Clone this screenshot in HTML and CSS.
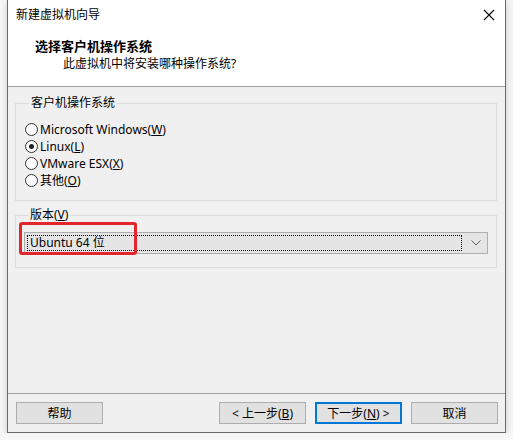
FILE: index.html
```html
<!DOCTYPE html>
<html lang="zh-CN">
<head>
    <meta charset="UTF-8">
    <title>新建虚拟机向导</title>
    <link rel="stylesheet" href="styles.css">
</head>
<body>

<div class="window">
    <div class="header">
        <div class="titlebar">
            <span class="title">新建虚拟机向导</span>
            <svg class="close" width="12" height="12" viewBox="0 0 12 12">
                <path d="M1 1 L11 11 M11 1 L1 11" stroke="#000" stroke-width="1.1" fill="none"/>
            </svg>
        </div>
        <h1>选择客户机操作系统</h1>
        <p class="subtitle">此虚拟机中将安装哪种操作系统?</p>
    </div>

    <div class="content">
        <fieldset class="group">
            <legend>客户机操作系统</legend>
            <div class="radio-list">
                <label class="radio"><span class="dot"></span><span>Microsoft Windows(<u>W</u>)</span></label>
                <label class="radio checked"><span class="dot"></span><span>Linux(<u>L</u>)</span></label>
                <label class="radio"><span class="dot"></span><span>VMware ESX(<u>X</u>)</span></label>
                <label class="radio"><span class="dot"></span><span>其他(<u>O</u>)</span></label>
            </div>
        </fieldset>

        <fieldset class="group version">
            <legend>版本(<u>V</u>)</legend>
            <div class="combo">
                <div class="combo-value">Ubuntu 64 位</div>
                <svg class="chevron" width="10" height="6" viewBox="0 0 10 6">
                    <path d="M0.5 0.5 L5 5 L9.5 0.5" stroke="#606060" stroke-width="1" fill="none"/>
                </svg>
            </div>
            <div class="highlight"></div>
        </fieldset>
    </div>

    <div class="footer">
        <button class="btn">帮助</button>
        <div class="nav">
            <button class="btn">&lt; 上一步(<u>B</u>)</button>
            <button class="btn primary">下一步(<u>N</u>) &gt;</button>
            <button class="btn">取消</button>
        </div>
    </div>
</div>

</body>
</html>
```

FILE: styles.css
```css
body {
    margin: 0;
    background-color: #f7f7f7;
    font-family: "Noto Sans", "Noto Sans CJK SC", sans-serif;
    font-size: 12px;
    color: #000;
}

.window {
    margin-left: 7px;
    width: 497px;
    height: 432px;
    border: 1px solid #6a6a6a;
    border-top: none;
    background-color: #f0f0f0;
    display: flex;
    flex-direction: column;
    box-shadow: 0 2px 8px rgba(0, 0, 0, 0.18);
}

.header {
    background-color: #ffffff;
    height: 86px;
    border-bottom: 1px solid #a0a0a0;
}

.titlebar {
    height: 30px;
    display: flex;
    align-items: center;
    justify-content: space-between;
    padding: 0 10px 0 8px;
}

.title {
    line-height: 14px;
}

h1 {
    margin: 0;
    padding-left: 27px;
    font-size: 13px;
    font-weight: bold;
    line-height: 16px;
    margin-top: 8px;
}

.subtitle {
    margin: 2px 0 0;
    padding-left: 55px;
    line-height: 16px;
}

.content {
    flex: 1;
    padding: 0 8px 0 7px;
}

.group {
    margin: 9px 0 0;
    padding: 11px 8px 11px 9px;
    border: 1px solid #dcdcdc;
    min-width: 0;
}

.group legend {
    padding: 0 2px;
    margin-left: 4px;
    line-height: 14px;
}

.radio-list {
    display: flex;
    flex-direction: column;
}

.radio {
    height: 17px;
    display: flex;
    align-items: center;
    gap: 2px;
    line-height: 17px;
}

.dot {
    width: 11px;
    height: 11px;
    border: 1px solid #333;
    border-radius: 50%;
    background: #fff;
    display: flex;
    align-items: center;
    justify-content: center;
}

.radio.checked .dot::after {
    content: "";
    width: 5px;
    height: 5px;
    border-radius: 50%;
    background: #222;
}

.version {
    position: relative;
    margin-top: 7px;
    padding: 10px 8px 13px 8px;
}

.combo {
    height: 20px;
    border: 1px solid #adadad;
    background-color: #e5e5e5;
    display: flex;
    align-items: center;
    padding: 0 6px 0 2px;
}

.combo-value {
    flex: 1;
    height: 14px;
    line-height: 14px;
    border: 1px dotted #000;
    padding-left: 2px;
    margin-right: 9px;
}

.chevron {
    display: block;
}

.highlight {
    position: absolute;
    left: 3px;
    top: 0;
    width: 112px;
    height: 27px;
    border: 3px solid #e3262b;
    border-radius: 3px;
}

.footer {
    border-top: 1px solid #a0a0a0;
    padding: 8px 7px 8px 8px;
    display: flex;
    justify-content: space-between;
}

.nav {
    display: flex;
    gap: 9px;
}

.btn {
    width: 87px;
    height: 22px;
    border: 1px solid #adadad;
    background-color: #e1e1e1;
    font-family: inherit;
    font-size: 12px;
    padding: 0;
    color: #000;
}

.btn.primary {
    border: 2px solid #0078d7;
}
```
